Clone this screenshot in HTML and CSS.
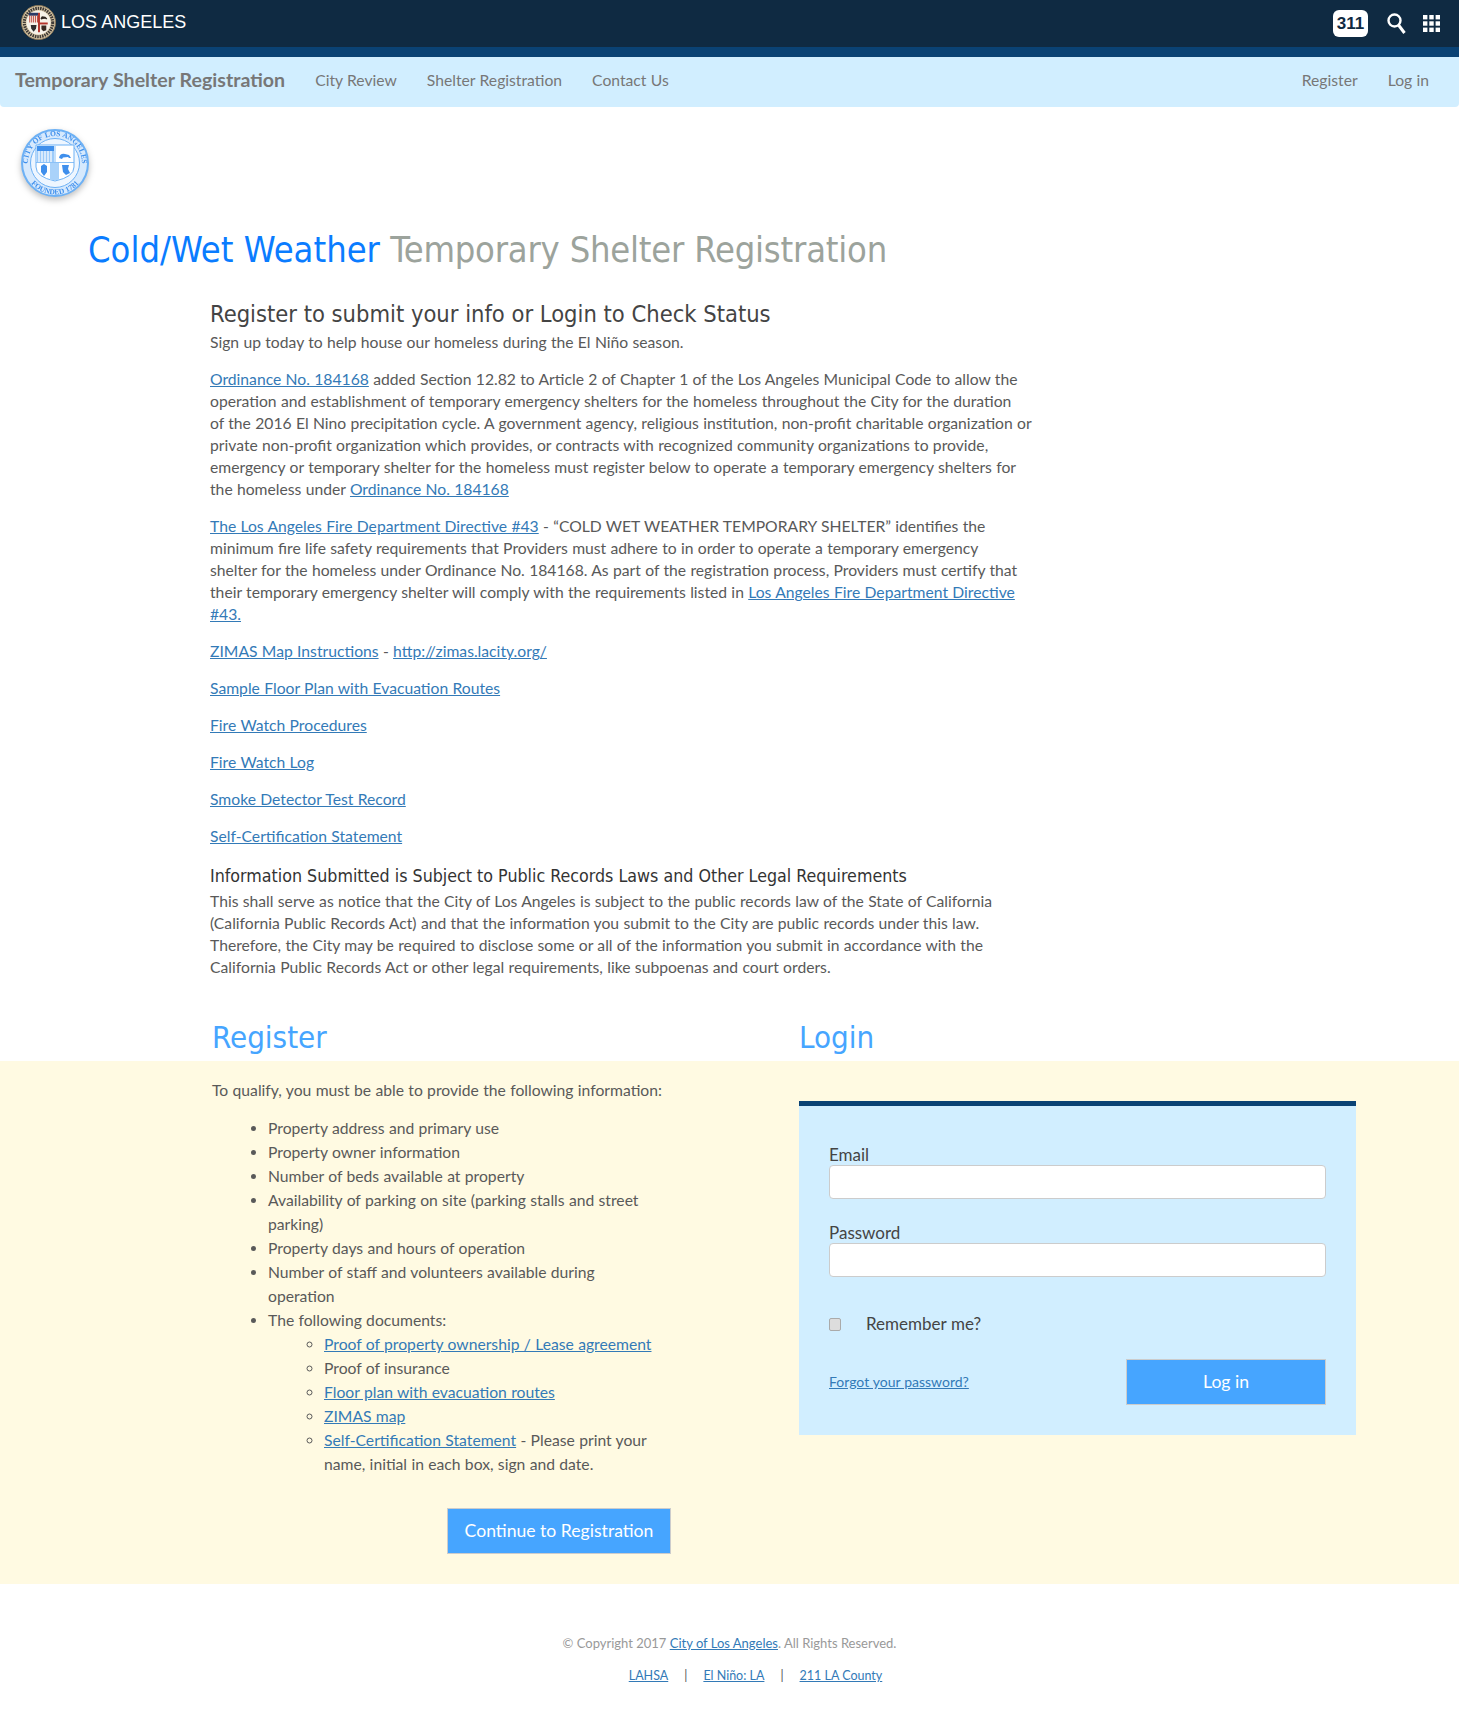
FILE: index.html
```html
<!DOCTYPE html>
<html lang="en">
<head>
  <meta charset="UTF-8">
  <title>Temporary Shelter Registration</title>
  <link rel="stylesheet" href="styles.css">
</head>
<body>
  <div class="topbar">
    <a class="city" href="#">
      <svg class="city-seal" viewBox="0 0 36 36">
        <circle cx="18" cy="18" r="17.5" fill="#d9c9a8" stroke="#8a7656" stroke-width="1"/>
        <circle cx="18" cy="18" r="14.6" fill="none" stroke="#3f3a36" stroke-width="3.2" stroke-dasharray="1.6 .9"/>
        <circle cx="18" cy="18" r="12.4" fill="#f6f2e8"/>
        <rect x="8" y="8" width="9.5" height="3" fill="#2a3a66"/>
        <path d="M9 11v7M11 11v7M13 11v7M15 11v7M17 11v7" stroke="#b5342a" stroke-width=".9"/>
        <path d="M20 14l1.500-2.500 3.500 .5 2 2-1 .8-1-.6-3 .2-.5 .8z" fill="#2e2620"/>
        <path d="M10 20.500h6l-.6 4-2.400 3-2.400-3z" fill="#2e2e2e"/>
        <rect x="17.500" y="8" width="2" height="20" fill="#b5342a"/>
        <rect x="19.500" y="18" width="8" height="2" fill="#b5342a"/>
        <path d="M21 21h5v5l-3 1-2-2z" fill="#3a2a20"/>
      </svg>
      <span>LOS ANGELES</span>
    </a>
    <div class="top-tools">
      <span class="badge-311">311</span>
      <svg class="top-search" viewBox="0 0 19 21">
        <circle cx="7.500" cy="7.500" r="6" fill="none" stroke="#fff" stroke-width="2.400"/>
        <path d="M11.500 12l6 8" stroke="#fff" stroke-width="3"/>
      </svg>
      <svg class="top-grid" viewBox="0 0 17 17" fill="#fff">
        <rect width="4.400" height="4.400"/><rect x="6.300" width="4.400" height="4.400"/><rect x="12.600" width="4.400" height="4.400"/>
        <rect y="6.300" width="4.400" height="4.400"/><rect x="6.300" y="6.300" width="4.400" height="4.400"/><rect x="12.600" y="6.300" width="4.400" height="4.400"/>
        <rect y="12.600" width="4.400" height="4.400"/><rect x="6.300" y="12.600" width="4.400" height="4.400"/><rect x="12.600" y="12.600" width="4.400" height="4.400"/>
      </svg>
    </div>
  </div>
  <div class="topstripe"></div>

  <nav class="subnav">
    <a class="brand" href="#">Temporary Shelter Registration</a>
    <a href="#">City Review</a>
    <a href="#">Shelter Registration</a>
    <a href="#">Contact Us</a>
    <span class="spacer"></span>
    <a href="#">Register</a>
    <a href="#">Log in</a>
  </nav>

  <svg class="page-seal" viewBox="0 0 80 80">
    <defs>
      <path id="sealTop" d="M13 40a27 27 0 0 1 54 0"/>
      <path id="sealBottom" d="M8.500 40a31.500 31.500 0 0 0 63 0"/>
    </defs>
    <circle cx="40" cy="40" r="33" fill="#d6e9fd" stroke="#6db1f5" stroke-width="2"/>
    <circle cx="40" cy="40" r="24.500" fill="#eef6ff" stroke="#6db1f5" stroke-width="1"/>
    <text class="seal-text"><textPath href="#sealTop" startOffset="50%" text-anchor="middle">CITY OF LOS ANGELES</textPath></text>
    <text class="seal-text"><textPath href="#sealBottom" startOffset="50%" text-anchor="middle">FOUNDED 1781</textPath></text>
    <path d="M21 22h38v22q0 10-19 14-19-4-19-14z" fill="#fff" stroke="#6db1f5"/>
    <rect x="22" y="23" width="17" height="5" fill="#3f8fec"/>
    <rect x="22" y="28" width="17" height="11" fill="#9ccbfa"/>
    <path d="M24 28v11M27 28v11M30 28v11M33 28v11M36 28v11" stroke="#fff" stroke-width="1.200"/>
    <path d="M44 35q1-5 6-4l4 1 2 3h-2l-1-1-5 .5-1 1.500z" fill="#3f8fec"/>
    <rect x="35" y="40" width="9" height="17" fill="#a9d2fa"/>
    <path d="M26 43l3-2 3 2v6l-3 4-3-4z" fill="#3f8fec"/>
    <path d="M47 42h7l-1 4 2 4-4 2-3-3z" fill="#3f8fec"/>
    <path d="M21 39.500h38M40 23v16" stroke="#6db1f5" stroke-width=".8"/>
  </svg>

  <h1 class="page-title"><span class="title-blue">Cold/Wet Weather</span> <span class="title-grey">Temporary Shelter Registration</span></h1>

  <main class="intro">
    <h2>Register to submit your info or Login to Check Status</h2>
    <p class="lead">Sign up today to help house our homeless during the El Niño season.</p>
    <p><a href="#">Ordinance No. 184168</a> added Section 12.82 to Article 2 of Chapter 1 of the Los Angeles Municipal Code to allow the<br>operation and establishment of temporary emergency shelters for the homeless throughout the City for the duration<br>of the 2016 El Nino precipitation cycle. A government agency, religious institution, non-profit charitable organization or<br>private non-profit organization which provides, or contracts with recognized community organizations to provide,<br>emergency or temporary shelter for the homeless must register below to operate a temporary emergency shelters for<br>the homeless under <a href="#">Ordinance No. 184168</a></p>
    <p><a href="#">The Los Angeles Fire Department Directive #43</a> - “COLD WET WEATHER TEMPORARY SHELTER” identifies the<br>minimum fire life safety requirements that Providers must adhere to in order to operate a temporary emergency<br>shelter for the homeless under Ordinance No. 184168. As part of the registration process, Providers must certify that<br>their temporary emergency shelter will comply with the requirements listed in <a href="#">Los Angeles Fire Department Directive<br>#43.</a></p>
    <p><a href="#">ZIMAS Map Instructions</a> - <a href="#">http://zimas.lacity.org/</a></p>
    <p><a href="#">Sample Floor Plan with Evacuation Routes</a></p>
    <p><a href="#">Fire Watch Procedures</a></p>
    <p><a href="#">Fire Watch Log</a></p>
    <p><a href="#">Smoke Detector Test Record</a></p>
    <p><a href="#">Self-Certification Statement</a></p>
    <h3>Information Submitted is Subject to Public Records Laws and Other Legal Requirements</h3>
    <p>This shall serve as notice that the City of Los Angeles is subject to the public records law of the State of California<br>(California Public Records Act) and that the information you submit to the City are public records under this law.<br>Therefore, the City may be required to disclose some or all of the information you submit in accordance with the<br>California Public Records Act or other legal requirements, like subpoenas and court orders.</p>
  </main>

  <div class="auth-heads">
    <h2>Register</h2>
    <h2>Login</h2>
  </div>

  <section class="auth-band">
    <div class="register-col">
      <p>To qualify, you must be able to provide the following information:</p>
      <ul>
        <li>Property address and primary use</li>
        <li>Property owner information</li>
        <li>Number of beds available at property</li>
        <li>Availability of parking on site (parking stalls and street parking)</li>
        <li>Property days and hours of operation</li>
        <li>Number of staff and volunteers available during operation</li>
        <li>The following documents:
          <ul>
            <li><a href="#">Proof of property ownership / Lease agreement</a></li>
            <li>Proof of insurance</li>
            <li><a href="#">Floor plan with evacuation routes</a></li>
            <li><a href="#">ZIMAS map</a></li>
            <li><a href="#">Self-Certification Statement</a> - Please print your name, initial in each box, sign and date.</li>
          </ul>
        </li>
      </ul>
      <div class="continue-row"><button class="btn continue-btn">Continue to Registration</button></div>
    </div>

    <form class="login-panel">
      <label class="field-label">Email</label>
      <input class="field-input" type="text">
      <label class="field-label">Password</label>
      <input class="field-input" type="password">
      <div class="remember"><input type="checkbox"><span>Remember me?</span></div>
      <div class="login-foot">
        <a href="#">Forgot your password?</a>
        <button class="btn login-btn" type="button">Log in</button>
      </div>
    </form>
  </section>

  <footer class="footer">
    <p>© Copyright 2017 <a href="#">City of Los Angeles</a>. All Rights Reserved.</p>
    <p class="footer-links"><a href="#">LAHSA</a><span>|</span><a href="#">El Niño: LA</a><span>|</span><a href="#">211 LA County</a></p>
  </footer>
</body>
</html>
```

FILE: styles.css
```css
* {
  box-sizing: border-box;
}
body {
  margin: 0;
  font-family: Lato, "Open Sans", Arial, sans-serif;
  font-size: 15.7px;
  line-height: 22px;
  word-spacing: .3px;
  color: #595959;
  background: #fff;
}
a {
  color: #337ab7;
}

/* top bar */
.topbar {
  height: 47px;
  background: #0f2a42;
  display: flex;
  align-items: center;
  justify-content: space-between;
  padding: 0 19px 0 21px;
}
.city {
  display: flex;
  align-items: center;
  gap: 5px;
  padding-bottom: 3px;
  color: #fff;
  text-decoration: none;
  font-family: "Liberation Sans", Arial, sans-serif;
  font-size: 18px;
}
.city-seal {
  width: 35px;
  height: 35px;
}
.top-tools {
  display: flex;
  align-items: center;
}
.badge-311 {
  width: 35px;
  height: 27px;
  border-radius: 6px;
  background: #fff;
  color: #0f2a42;
  font-family: "Liberation Sans", Arial, sans-serif;
  font-weight: bold;
  font-size: 17px;
  line-height: 27px;
  text-align: center;
}
.top-search {
  width: 19px;
  height: 21px;
  margin: 0 17px 0 19px;
}
.top-grid {
  width: 17px;
  height: 17px;
}
.topstripe {
  height: 10px;
  background: #0a4274;
}

/* sub nav */
.subnav {
  height: 50px;
  background: #d1eeff;
  border-radius: 0 0 4px 4px;
  display: flex;
  align-items: center;
  gap: 30px;
  padding: 0 30px 4px 15px;
}
.subnav a {
  color: #777;
  text-decoration: none;
}
.subnav .brand {
  font-size: 19.6px;
  font-weight: bold;
}
.spacer {
  flex: 1;
}

.page-seal {
  display: block;
  width: 80px;
  height: 80px;
  margin: 16px 0 0 15px;
  filter: drop-shadow(0 3px 3px rgba(0,0,0,.25));
}
.seal-text {
  font-family: "Liberation Serif", serif;
  font-size: 7.500px;
  font-weight: bold;
  fill: #3f8fec;
}

.page-title {
  margin: 25px 0 0 88px;
  font-family: "DejaVu Sans", sans-serif;
  font-stretch: condensed;
  font-weight: normal;
  font-size: 36px;
  line-height: 44px;
  word-spacing: 0;
  color: #9ca39c;
}
.title-blue {
  color: #0a7cff;
}
.title-grey {
  letter-spacing: -.2px;
}

/* intro text */
.intro {
  width: 860px;
  margin: 26px 0 0 210px;
}
.intro h2 {
  margin: 0;
  font-family: "DejaVu Sans", sans-serif;
  font-stretch: condensed;
  font-weight: normal;
  font-size: 23.500px;
  line-height: 32px;
  word-spacing: 0;
  color: #444;
}
.intro p {
  margin: 0 0 15px;
}
.intro .lead {
  margin-top: 1px;
}
.intro h3 {
  margin: 16px 0 1px;
  font-family: "DejaVu Sans", sans-serif;
  font-stretch: condensed;
  font-weight: normal;
  font-size: 17.700px;
  line-height: 26px;
  word-spacing: 0;
  color: #333;
}

/* register and login */
.auth-heads {
  display: grid;
  grid-template-columns: 587px 557px;
  padding-left: 212px;
  margin-top: 37px;
  padding-bottom: 1px;
}
.auth-heads h2 {
  margin: 0;
  font-family: "DejaVu Sans", sans-serif;
  font-stretch: condensed;
  font-weight: normal;
  font-size: 31px;
  line-height: 45px;
  word-spacing: 0;
  color: #46a5ff;
}
.auth-band {
  background: #fffae2;
  height: 523px;
  display: grid;
  grid-template-columns: 587px 557px;
  padding: 19px 0 0 212px;
}
.register-col {
  width: 460px;
}
.register-col p {
  margin: -1px 0 15px;
}
.register-col ul {
  margin: 0;
  padding-left: 56px;
  line-height: 24px;
}
.register-col > ul {
  width: 440px;
}
.register-col ul ul {
  list-style: circle;
}
.continue-row {
  margin-top: 32px;
  padding-left: 235px;
}
.btn {
  border: 1px solid #ccc;
  background: #46a5ff;
  color: #fff;
  font: inherit;
  font-size: 17.600px;
  height: 46px;
}
.continue-btn {
  width: 224px;
}

.login-panel {
  height: 334px;
  margin-top: 21px;
  background: #d1eeff;
  border-top: 5px solid #0a4274;
  padding: 39px 30px 0;
}
.field-label {
  display: block;
  font-size: 17px;
  line-height: 20px;
  color: #444;
}
.field-input {
  display: block;
  width: 100%;
  height: 34px;
  margin-bottom: 24px;
  background: #fff;
  border: 1px solid #ccc;
  border-radius: 4px;
}
.remember {
  display: flex;
  align-items: center;
  gap: 25px;
  margin-top: 36px;
  font-size: 17px;
  color: #444;
}
.remember input {
  appearance: none;
  width: 12px;
  height: 13px;
  margin: 0;
  background: #ddd;
  border: 1px solid #aaa;
  border-radius: 2px;
}
.login-foot {
  display: flex;
  align-items: center;
  justify-content: space-between;
  margin-top: 24px;
}
.login-foot a {
  font-size: 14px;
}
.login-btn {
  width: 200px;
}

.footer {
  margin-top: 48px;
  text-align: center;
  font-size: 13px;
  word-spacing: 0;
  color: #999;
}
.footer p {
  margin: 0 0 11px;
}
.footer-links {
  padding-left: 52px;
  font-size: 12.500px;
}
.footer-links span {
  margin: 0 16px;
  color: #555;
}
```
